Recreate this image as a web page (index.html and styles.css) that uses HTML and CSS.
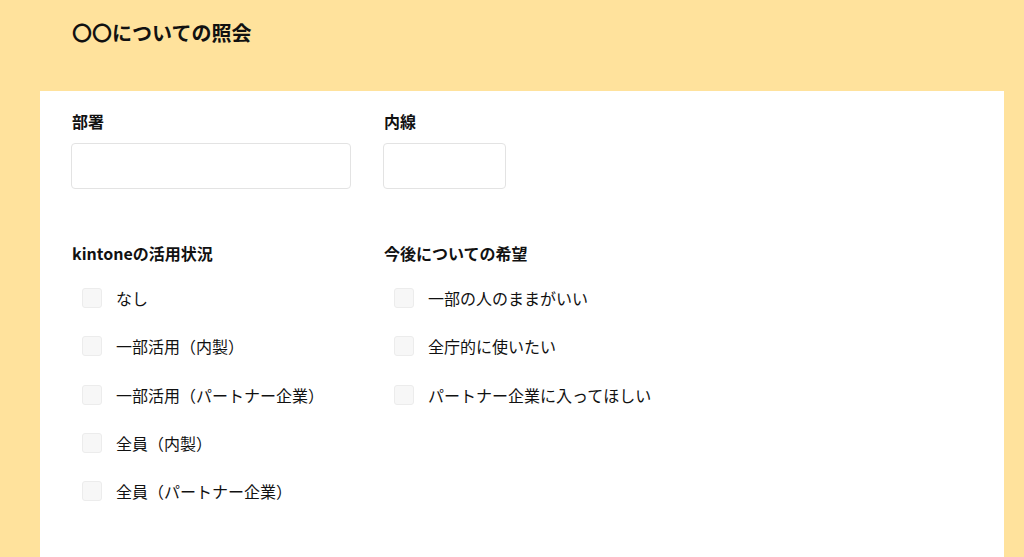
FILE: index.html
```html
<!DOCTYPE html>
<html lang="ja">
<head>
<meta charset="utf-8">
<link rel="stylesheet" href="styles.css">
</head>
<body>
<header class="header">
  <h1 class="title">〇〇についての照会</h1>
</header>
<main class="panel">
  <div class="row">
    <div class="field field-wide">
      <div class="label">部署</div>
      <div class="input input-wide"></div>
    </div>
    <div class="field">
      <div class="label">内線</div>
      <div class="input input-narrow"></div>
    </div>
  </div>
  <div class="row row-checks">
    <div class="field field-wide">
      <div class="label">kintoneの活用状況</div>
      <ul class="checks">
        <li class="check"><span class="box"></span><span>なし</span></li>
        <li class="check"><span class="box"></span><span>一部活用（内製）</span></li>
        <li class="check"><span class="box"></span><span>一部活用（パートナー企業）</span></li>
        <li class="check"><span class="box"></span><span>全員（内製）</span></li>
        <li class="check"><span class="box"></span><span>全員（パートナー企業）</span></li>
      </ul>
    </div>
    <div class="field">
      <div class="label">今後についての希望</div>
      <ul class="checks">
        <li class="check"><span class="box"></span><span>一部の人のままがいい</span></li>
        <li class="check"><span class="box"></span><span>全庁的に使いたい</span></li>
        <li class="check"><span class="box"></span><span>パートナー企業に入ってほしい</span></li>
      </ul>
    </div>
  </div>
</main>
</body>
</html>
```

FILE: styles.css
```css
html, body {
  margin: 0;
  padding: 0;
  height: 100%;
}
body {
  background: #ffe29c;
  font-family: "Noto Sans CJK JP", "Noto Sans", sans-serif;
  color: #111;
  display: flex;
  flex-direction: column;
  overflow: hidden;
}
.header {
  height: 91px;
  padding-left: 72px;
  box-sizing: border-box;
  padding-top: 19px;
}
.title {
  margin: 0;
  font-size: 20px;
  line-height: 28px;
  font-weight: 700;
}
.panel {
  flex: 1;
  background: #fff;
  margin: 0 20px 0 40px;
  padding: 20px 31px 0 31px;
}
.row {
  display: flex;
  gap: 33px;
}
.row-checks {
  margin-top: 54px;
}
.field-wide {
  width: 279px;
}
.label {
  font-size: 16px;
  font-weight: 700;
  line-height: 20px;
  height: 20px;
  padding-left: 1px;
}
.input {
  margin-top: 12px;
  height: 46px;
  box-sizing: border-box;
  border: 1px solid #e3e3e3;
  border-radius: 4px;
  background: #fff;
}
.input-wide {
  width: 280px;
}
.input-narrow {
  width: 123px;
}
.checks {
  list-style: none;
  margin: 11px 0 0 0;
  padding: 0 0 0 11px;
}
.check {
  height: 48.25px;
  display: flex;
  align-items: center;
  gap: 14px;
  font-size: 16px;
  white-space: nowrap;
}
.box {
  width: 20px;
  height: 20px;
  box-sizing: border-box;
  border: 1px solid #ececec;
  border-radius: 3px;
  background: #f7f7f7;
  flex: none;
}
```
